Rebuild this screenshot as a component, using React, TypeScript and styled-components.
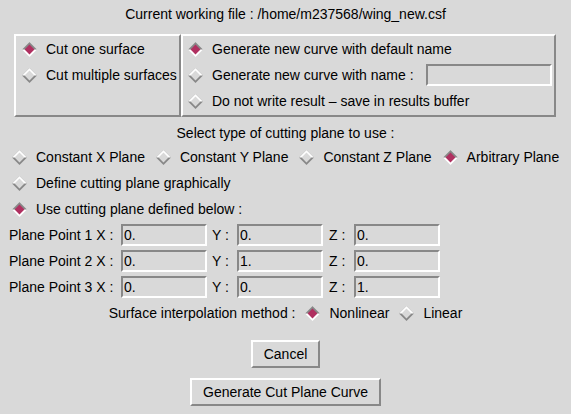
import React from "react";
import styled, { createGlobalStyle } from "styled-components";

const BG = "#d9d9d9";
const SHADOW = "#888888";
const HILITE = "#ffffff";
const SELECT = "#b03060";

const GlobalStyle = createGlobalStyle`
  html, body { margin: 0; padding: 0; background: ${BG}; }
`;

const Page = styled.div`
  width: 571px;
  height: 414px;
  box-sizing: border-box;
  padding-top: 6px;
  background: ${BG};
  color: #000;
  font-family: "Liberation Sans", Arial, sans-serif;
  font-size: 14px;
  display: flex;
  flex-direction: column;
`;

const Title = styled.div`
  text-align: center;
  line-height: 16px;
  white-space: nowrap;
`;

const Frame = styled.div`
  display: flex;
  margin: 12px 0 0 14px;
  width: 542px;
  height: 83px;
`;

const Box = styled.div<{ $w?: number; $pl: number }>`
  box-sizing: border-box;
  height: 100%;
  ${(p) => (p.$w ? `width: ${p.$w}px;` : "flex: 1;")}
  border: 2px solid;
  border-color: ${HILITE} ${SHADOW} ${SHADOW} ${HILITE};
  padding: 0 2px 0 ${(p) => p.$pl}px;
  display: flex;
  flex-direction: column;
`;

const BoxRow = styled.div`
  height: 26px;
  display: flex;
  align-items: center;
  white-space: nowrap;
`;

const Caption = styled.div`
  text-align: center;
  line-height: 16px;
  margin-top: 8px;
  white-space: nowrap;
`;

const TypeRow = styled.div`
  display: flex;
  align-items: center;
  gap: 11px;
  height: 26px;
  padding-left: 12px;
  margin-top: 3px;
  white-space: nowrap;
`;

const OptionRow = styled.div`
  display: flex;
  align-items: center;
  height: 26px;
  padding-left: 12px;
  white-space: nowrap;
`;

const PointGrid = styled.div`
  display: grid;
  grid-template-columns: 112px 86px 30px 86px 31px 86px;
  grid-auto-rows: 26px;
  align-items: center;
  padding-left: 9px;
  white-space: nowrap;
`;

const AxisLabel = styled.span<{ $pl: number }>`
  padding-left: ${(p) => p.$pl}px;
`;

const Field = styled.input<{ $w: number }>`
  box-sizing: border-box;
  width: ${(p) => p.$w}px;
  height: 22px;
  margin: 0;
  padding: 0 1px;
  border: 2px solid;
  border-color: ${SHADOW} ${HILITE} ${HILITE} ${SHADOW};
  background: ${BG};
  color: #000;
  font-family: "Liberation Sans", Arial, sans-serif;
  font-size: 14px;
  outline: none;
`;

const NameField = styled(Field)`
  margin-left: auto;
`;

const SurfaceRow = styled.div`
  display: flex;
  align-items: center;
  justify-content: center;
  gap: 10px;
  height: 26px;
  white-space: nowrap;
`;

const Buttons = styled.div`
  display: flex;
  flex-direction: column;
  align-items: center;
`;

const Button = styled.button<{ $mt: number }>`
  box-sizing: border-box;
  height: 28px;
  margin-top: ${(p) => p.$mt}px;
  padding: 0 11px;
  border: 2px solid;
  border-color: ${HILITE} ${SHADOW} ${SHADOW} ${HILITE};
  background: ${BG};
  color: #000;
  font-family: "Liberation Sans", Arial, sans-serif;
  font-size: 14px;
  white-space: nowrap;
`;

const ToggleWrap = styled.span`
  display: inline-flex;
  align-items: center;
  gap: 9px;
`;

const DiamondSvg = styled.svg`
  display: block;
  flex: none;
`;

function Diamond({ on }: { on: boolean }) {
  const top = on ? SHADOW : HILITE;
  const bottom = on ? HILITE : SHADOW;
  const fill = on ? SELECT : BG;
  return (
    <DiamondSvg width="15" height="15" viewBox="0 0 15 15">
      <polygon points="7.5,0 15,7.5 7.5,15 0,7.5" fill={bottom} />
      <polygon points="0,7.5 7.5,0 15,7.5" fill={top} />
      <polygon points="7.5,2.6 12.4,7.5 7.5,12.4 2.6,7.5" fill={fill} />
    </DiamondSvg>
  );
}

function Toggle({ on, label }: { on?: boolean; label: string }) {
  return (
    <ToggleWrap>
      <Diamond on={!!on} />
      <span>{label}</span>
    </ToggleWrap>
  );
}

const points = [
  { n: 1, x: "0.", y: "0.", z: "0." },
  { n: 2, x: "0.", y: "1.", z: "0." },
  { n: 3, x: "0.", y: "0.", z: "1." },
];

export default function App() {
  return (
    <Page>
      <GlobalStyle />
      <Title>Current working file : /home/m237568/wing_new.csf</Title>
      <Frame>
        <Box $w={167} $pl={6}>
          <BoxRow>
            <Toggle on label="Cut one surface" />
          </BoxRow>
          <BoxRow>
            <Toggle label="Cut multiple surfaces" />
          </BoxRow>
        </Box>
        <Box $pl={5}>
          <BoxRow>
            <Toggle on label="Generate new curve with default name" />
          </BoxRow>
          <BoxRow>
            <Toggle label="Generate new curve with name :" />
            <NameField $w={126} readOnly value="" />
          </BoxRow>
          <BoxRow>
            <Toggle label="Do not write result – save in results buffer" />
          </BoxRow>
        </Box>
      </Frame>
      <Caption>Select type of cutting plane to use :</Caption>
      <TypeRow>
        <Toggle label="Constant X Plane" />
        <Toggle label="Constant Y Plane" />
        <Toggle label="Constant Z Plane" />
        <Toggle on label="Arbitrary Plane" />
      </TypeRow>
      <OptionRow>
        <Toggle label="Define cutting plane graphically" />
      </OptionRow>
      <OptionRow>
        <Toggle on label="Use cutting plane defined below :" />
      </OptionRow>
      <PointGrid>
        {points.map((p) => (
          <React.Fragment key={p.n}>
            <span>Plane Point {p.n} X :</span>
            <Field $w={86} readOnly value={p.x} />
            <AxisLabel $pl={5}>Y :</AxisLabel>
            <Field $w={86} readOnly value={p.y} />
            <AxisLabel $pl={6}>Z :</AxisLabel>
            <Field $w={86} readOnly value={p.z} />
          </React.Fragment>
        ))}
      </PointGrid>
      <SurfaceRow>
        <span>Surface interpolation method :</span>
        <Toggle on label="Nonlinear" />
        <Toggle label="Linear" />
      </SurfaceRow>
      <Buttons>
        <Button $mt={14}>Cancel</Button>
        <Button $mt={10}>Generate Cut Plane Curve</Button>
      </Buttons>
    </Page>
  );
}
